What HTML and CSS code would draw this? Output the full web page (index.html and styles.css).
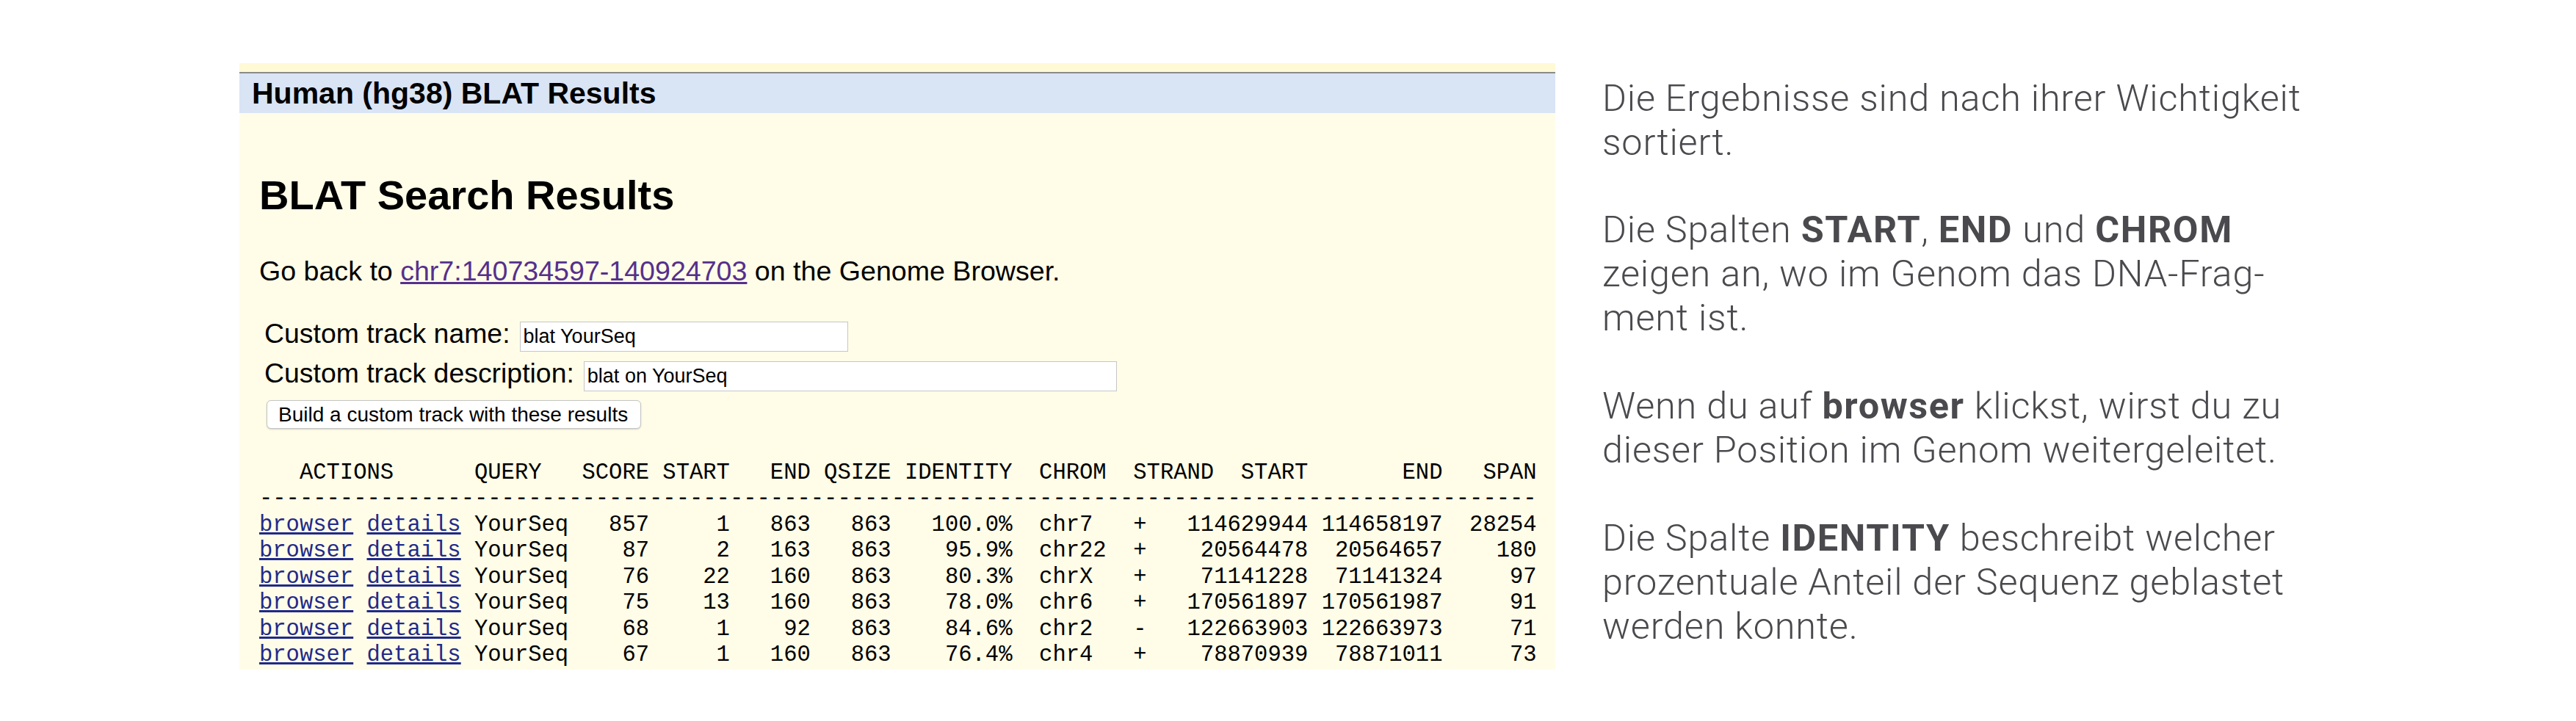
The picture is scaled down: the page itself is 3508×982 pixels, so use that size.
FILE: index.html
```html
<!DOCTYPE html>
<html lang="de">
<head>
<meta charset="utf-8">
<title>BLAT Search Results</title>
<link rel="stylesheet" href="styles.css">
</head>
<body>
<div class="page">
  <div class="panel">
    <div class="topband"></div>
    <div class="titlebar">Human (hg38) BLAT Results</div>
    <div class="content">
      <h1 class="heading">BLAT Search Results</h1>
      <p class="goback">Go back to <a class="poslink" href="#">chr7:140734597-140924703</a> on the Genome Browser.</p>
      <div class="form">
        <div class="form-row"><span class="label">Custom track name:</span><input class="field field-name" type="text" value="blat YourSeq"></div>
        <div class="form-row form-row-2"><span class="label">Custom track description:</span><input class="field field-desc" type="text" value="blat on YourSeq"></div>
        <button class="build" type="button">Build a custom track with these results</button>
      </div>
<pre class="results">
   ACTIONS      QUERY   SCORE START   END QSIZE IDENTITY  CHROM  STRAND  START       END   SPAN
-----------------------------------------------------------------------------------------------
<a class="act" href="#">browser</a> <a class="act" href="#">details</a> YourSeq   857     1   863   863   100.0%  chr7   +   114629944 114658197  28254
<a class="act" href="#">browser</a> <a class="act" href="#">details</a> YourSeq    87     2   163   863    95.9%  chr22  +    20564478  20564657    180
<a class="act" href="#">browser</a> <a class="act" href="#">details</a> YourSeq    76    22   160   863    80.3%  chrX   +    71141228  71141324     97
<a class="act" href="#">browser</a> <a class="act" href="#">details</a> YourSeq    75    13   160   863    78.0%  chr6   +   170561897 170561987     91
<a class="act" href="#">browser</a> <a class="act" href="#">details</a> YourSeq    68     1    92   863    84.6%  chr2   -   122663903 122663973     71
<a class="act" href="#">browser</a> <a class="act" href="#">details</a> YourSeq    67     1   160   863    76.4%  chr4   +    78870939  78871011     73
</pre>
    </div>
  </div>
  <div class="notes">
    <p class="note">Die Ergebnisse sind nach ihrer Wichtigkeit<br>sortiert.</p>
    <p class="note">Die Spalten <b>START</b>, <b>END</b> und <b>CHROM</b><br>zeigen an, wo im Genom das DNA-Frag-<br>ment ist.</p>
    <p class="note">Wenn du auf <b>browser</b> klickst, wirst du zu<br>dieser Position im Genom weitergeleitet.</p>
    <p class="note">Die Spalte <b>IDENTITY</b> beschreibt welcher<br>prozentuale Anteil der Sequenz geblastet<br>werden konnte.</p>
  </div>
</div>
</body>
</html>
```
FILE: styles.css
```css
html, body {
  margin: 0;
  padding: 0;
  background: #ffffff;
}

.page {
  display: flex;
  align-items: flex-start;
  padding: 86px 0 0 326px;
}

.panel {
  width: 1792px;
  height: 826px;
  overflow: hidden;
  background: #fffde8;
  font-family: "Liberation Sans", Arial, Helvetica, sans-serif;
  color: #000;
  flex: none;
}

.topband {
  height: 12px;
  background: #fff9d6;
}

.titlebar {
  height: 54px;
  border-top: 2px solid #8a8a8a;
  background: #d9e4f5;
  font-weight: bold;
  font-size: 41px;
  line-height: 54px;
  padding-left: 17px;
  white-space: nowrap;
}

.content {
  padding-left: 27px;
}

.heading {
  margin: 80px 0 0;
  font-size: 56px;
  line-height: 64px;
  font-weight: bold;
}

.goback {
  margin: 49.5px 0 0;
  font-size: 37.6px;
  line-height: 43px;
}

.poslink {
  color: #55308d;
  text-decoration: underline;
}

.form {
  margin-top: 42px;
  padding-left: 7px;
}

.form-row {
  display: flex;
  align-items: baseline;
  gap: 13px;
}

.form-row-2 {
  margin-top: 8.5px;
}

.label {
  font-size: 37.4px;
  line-height: 43px;
}

.field {
  box-sizing: border-box;
  height: 41px;
  border: 1px solid #c6c6c6;
  background: #ffffff;
  font-family: "Liberation Sans", Arial, Helvetica, sans-serif;
  font-size: 27px;
  padding: 0 4px;
  margin: 0;
  color: #000;
  outline: none;
}

.field-name {
  width: 447px;
}

.field-desc {
  width: 726px;
}

.build {
  display: block;
  box-sizing: border-box;
  margin: 12px 0 0 3px;
  height: 39px;
  width: 510px;
  padding: 0 15px;
  background: #ffffff;
  border: 1px solid #c4c4c4;
  border-radius: 6px;
  box-shadow: 0 1px 2px rgba(0, 0, 0, 0.18);
  font-family: "Liberation Sans", Arial, Helvetica, sans-serif;
  font-size: 28px;
  color: #000;
  text-align: left;
}

.results {
  margin: 42.8px 0 0;
  font-family: "Liberation Mono", "Courier New", monospace;
  font-size: 30.53px;
  line-height: 35.5px;
  color: #000;
}

.act {
  color: #1f2a8a;
  text-decoration: underline;
}

.notes {
  margin-left: 64px;
  padding-top: 17.7px;
  font-family: Roboto, "Liberation Sans", Arial, sans-serif;
  font-weight: 300;
  font-size: 50.4px;
  letter-spacing: 0.8px;
  line-height: 59.92px;
  color: #4a4a4e;
  white-space: nowrap;
}

.note {
  margin: 0 0 59.92px;
}

.note b {
  font-weight: bold;
  letter-spacing: 1.6px;
}
```
